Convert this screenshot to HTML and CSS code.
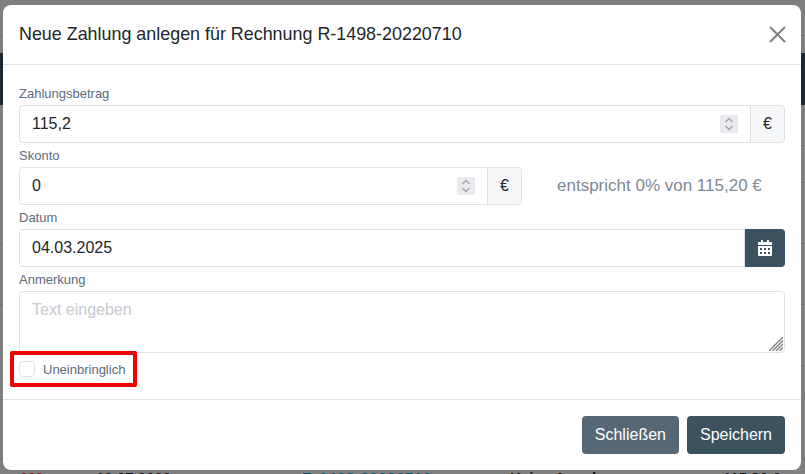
FILE: index.html
```html
<!DOCTYPE html>
<html lang="de">
<head>
    <meta charset="UTF-8">
    <meta name="viewport" content="width=device-width, initial-scale=1.0">
    <title>Neue Zahlung</title>
    <link rel="stylesheet" href="styles.css">
</head>
<body>
    <!-- Seite hinter dem Dialog -->
    <div class="page">
        <div class="page-top"></div>
        <div class="page-navbar"></div>
        <div class="page-line line-40"></div>
        <div class="page-line line-37"></div>
        <div class="page-line line-61"></div>
        <div class="page-line line-61"></div>
        <div class="page-line line-61"></div>
        <div class="page-line line-93"></div>
        <div class="page-row">
            <span class="cell-a">000</span>
            <span class="cell-b">10.07.2022</span>
            <span class="cell-c">R-1498-20220710</span>
            <span class="cell-d">Keine Angabe</span>
            <span class="cell-e">115,20 €</span>
        </div>
    </div>
    <div class="backdrop"></div>

    <div class="modal">
        <div class="modal-header">
            <h5 class="modal-title">Neue Zahlung anlegen für Rechnung R-1498-20220710</h5>
            <svg class="close-icon" width="17" height="17" viewBox="0 0 17 17">
                <path d="M1 1L16 16M16 1L1 16" stroke="#808080" stroke-width="2" fill="none"/>
            </svg>
        </div>

        <div class="modal-body">
            <label class="field-label">Zahlungsbetrag</label>
            <div class="input-group">
                <div class="input with-left-radius">
                    <span class="input-text">115,2</span>
                    <span class="spinner">
                        <svg width="10" height="14" viewBox="0 0 10 14">
                            <path d="M1.5 5L5 1.5L8.5 5M1.5 9L5 12.5L8.5 9" stroke="#a3a3ad" stroke-width="1.4" fill="none"/>
                        </svg>
                    </span>
                </div>
                <span class="addon addon-end">€</span>
            </div>

            <label class="field-label">Skonto</label>
            <div class="skonto-row">
                <div class="input-group skonto-group">
                    <div class="input with-left-radius">
                        <span class="input-text">0</span>
                        <span class="spinner">
                            <svg width="10" height="14" viewBox="0 0 10 14">
                                <path d="M1.5 5L5 1.5L8.5 5M1.5 9L5 12.5L8.5 9" stroke="#a3a3ad" stroke-width="1.4" fill="none"/>
                            </svg>
                        </span>
                    </div>
                    <span class="addon addon-end">€</span>
                </div>
                <span class="skonto-hint">entspricht 0% von 115,20 €</span>
            </div>

            <label class="field-label">Datum</label>
            <div class="input-group">
                <div class="input with-left-radius">
                    <span class="input-text">04.03.2025</span>
                </div>
                <span class="date-btn">
                    <svg width="14" height="16" viewBox="0 0 14 16">
                        <path fill="#fff" fill-rule="evenodd" d="M3 0h2v2h4V0h2v2h2a1 1 0 0 1 1 1v2H0V3a1 1 0 0 1 1-1h2zM0 6h14v9a1 1 0 0 1-1 1H1a1 1 0 0 1-1-1zM2 8v2h2V8zm4 0v2h2V8zm4 0v2h2V8zM2 12v2h2v-2zm4 0v2h2v-2zm4 0v2h2v-2z"/>
                    </svg>
                </span>
            </div>

            <label class="field-label">Anmerkung</label>
            <div class="textarea">
                <span class="placeholder">Text eingeben</span>
                <svg class="resize-grip" width="14" height="14" viewBox="0 0 14 14">
                    <path d="M0 14L14 0M3.5 14L14 3.5M7 14L14 7M10.5 14L14 10.5" stroke="#808080" stroke-width="1.4" fill="none"/>
                </svg>
            </div>

            <div class="check-row">
                <span class="checkbox"></span>
                <span class="check-label">Uneinbringlich</span>
            </div>
        </div>

        <div class="modal-footer">
            <button class="btn btn-secondary">Schließen</button>
            <button class="btn btn-primary">Speichern</button>
        </div>
    </div>
</body>
</html>
```

FILE: styles.css
```css
body {
    margin: 0;
    width: 805px;
    height: 474px;
    overflow: hidden;
    position: relative;
    font-family: "Liberation Sans", Arial, sans-serif;
    background-color: #fff;
    color: #212529;
}
.page {
    position: absolute;
    inset: 0;
    display: flex;
    flex-direction: column;
}
.page-top {
    flex: none;
    height: 36px;
    box-sizing: border-box;
    border-bottom: 1px solid #dee2e6;
    margin-bottom: 17px;
}
.page-navbar {
    flex: none;
    height: 52px;
    background-color: #3b5260;
}
.page-line {
    flex: none;
    box-sizing: border-box;
    border-bottom: 1px solid #dee2e6;
}
.line-40 {
    height: 41px;
}
.line-37 {
    height: 37px;
}
.line-61 {
    height: 61px;
}
.line-93 {
    height: 93px;
}
.page-row {
    flex: none;
    display: flex;
    margin-top: 11px;
    font-size: 15px;
    line-height: 16px;
    font-weight: bold;
    white-space: nowrap;
}
.cell-a {
    margin-left: 20px;
    width: 76px;
    font-size: 14px;
    color: #dc3545;
}
.cell-b {
    width: 206px;
}
.cell-c {
    width: 208px;
    letter-spacing: 0.6px;
    color: #17a2b8;
}
.cell-d {
    width: 213px;
}
.backdrop {
    position: absolute;
    inset: 0;
    background-color: rgba(0, 0, 0, 0.5);
}

.modal {
    position: absolute;
    top: 5px;
    left: 3px;
    width: 798px;
    height: 465px;
    box-sizing: border-box;
    background-color: #fff;
    border-radius: 8px;
    display: flex;
    flex-direction: column;
}
.modal-header {
    flex: none;
    height: 60px;
    box-sizing: border-box;
    border-bottom: 1px solid #dee2e6;
    padding: 0 15px 0 16px;
    display: flex;
    align-items: center;
    justify-content: space-between;
}
.modal-title {
    margin: 0;
    font-size: 17.9px;
    font-weight: normal;
}
.modal-body {
    flex: 1;
    padding: 16px 16px 0 16px;
}
.field-label {
    display: block;
    box-sizing: border-box;
    padding-top: 1px;
    font-size: 13px;
    line-height: 23px;
    height: 24px;
    color: #5c6b7a;
}
.input-group {
    display: flex;
    height: 38px;
}
.input {
    flex: 1;
    box-sizing: border-box;
    border: 1px solid #dee2e6;
    padding: 0 12px;
    display: flex;
    align-items: center;
    justify-content: space-between;
    font-size: 16px;
}
.with-left-radius {
    border-radius: 4px 0 0 4px;
}
.spinner {
    width: 18px;
    height: 18px;
    background-color: #e9e9ee;
    display: flex;
    align-items: center;
    justify-content: center;
}
.addon {
    box-sizing: border-box;
    flex: none;
    width: 35px;
    margin-left: -1px;
    border: 1px solid #dee2e6;
    background-color: #f6f7f9;
    display: flex;
    align-items: center;
    justify-content: center;
    font-size: 16px;
}
.addon-end {
    border-radius: 0 4px 4px 0;
}
.skonto-row {
    display: flex;
    align-items: center;
}
.skonto-group {
    width: 503px;
}
.skonto-hint {
    margin-left: 35px;
    font-size: 17px;
    color: #7f8a93;
}
.date-btn {
    flex: none;
    width: 40px;
    background-color: #3b5260;
    border-radius: 0 4px 4px 0;
    display: flex;
    align-items: center;
    justify-content: center;
}
.textarea {
    position: relative;
    box-sizing: border-box;
    height: 62px;
    border: 1px solid #dee2e6;
    border-radius: 4px;
    padding: 6px 12px;
}
.placeholder {
    font-size: 16px;
    line-height: 24px;
    color: #c5cbd3;
}
.resize-grip {
    position: absolute;
    right: 1px;
    bottom: 1px;
}
.check-row {
    position: relative;
    display: flex;
    align-items: center;
    box-sizing: border-box;
    margin: -2px 0 0 -9px;
    height: 36px;
    width: 127px;
    border: 4px solid #f00000;
    border-radius: 2px;
    padding-left: 5px;
}
.checkbox {
    box-sizing: border-box;
    width: 16px;
    height: 16px;
    border: 1px solid #dee2e6;
    border-radius: 4px;
}
.check-label {
    margin-left: 8px;
    font-size: 13px;
    color: #5c6b7a;
}
.modal-footer {
    flex: none;
    height: 71px;
    box-sizing: border-box;
    border-top: 1px solid #dee2e6;
    padding: 0 16px;
    display: flex;
    align-items: center;
    justify-content: flex-end;
    gap: 8px;
}
.btn {
    height: 38px;
    border: none;
    border-radius: 4px;
    padding: 0 13px;
    font-family: inherit;
    font-size: 16px;
    color: #fff;
    cursor: pointer;
}
.btn-secondary {
    background-color: #566875;
}
.btn-primary {
    background-color: #3b5260;
}
```
